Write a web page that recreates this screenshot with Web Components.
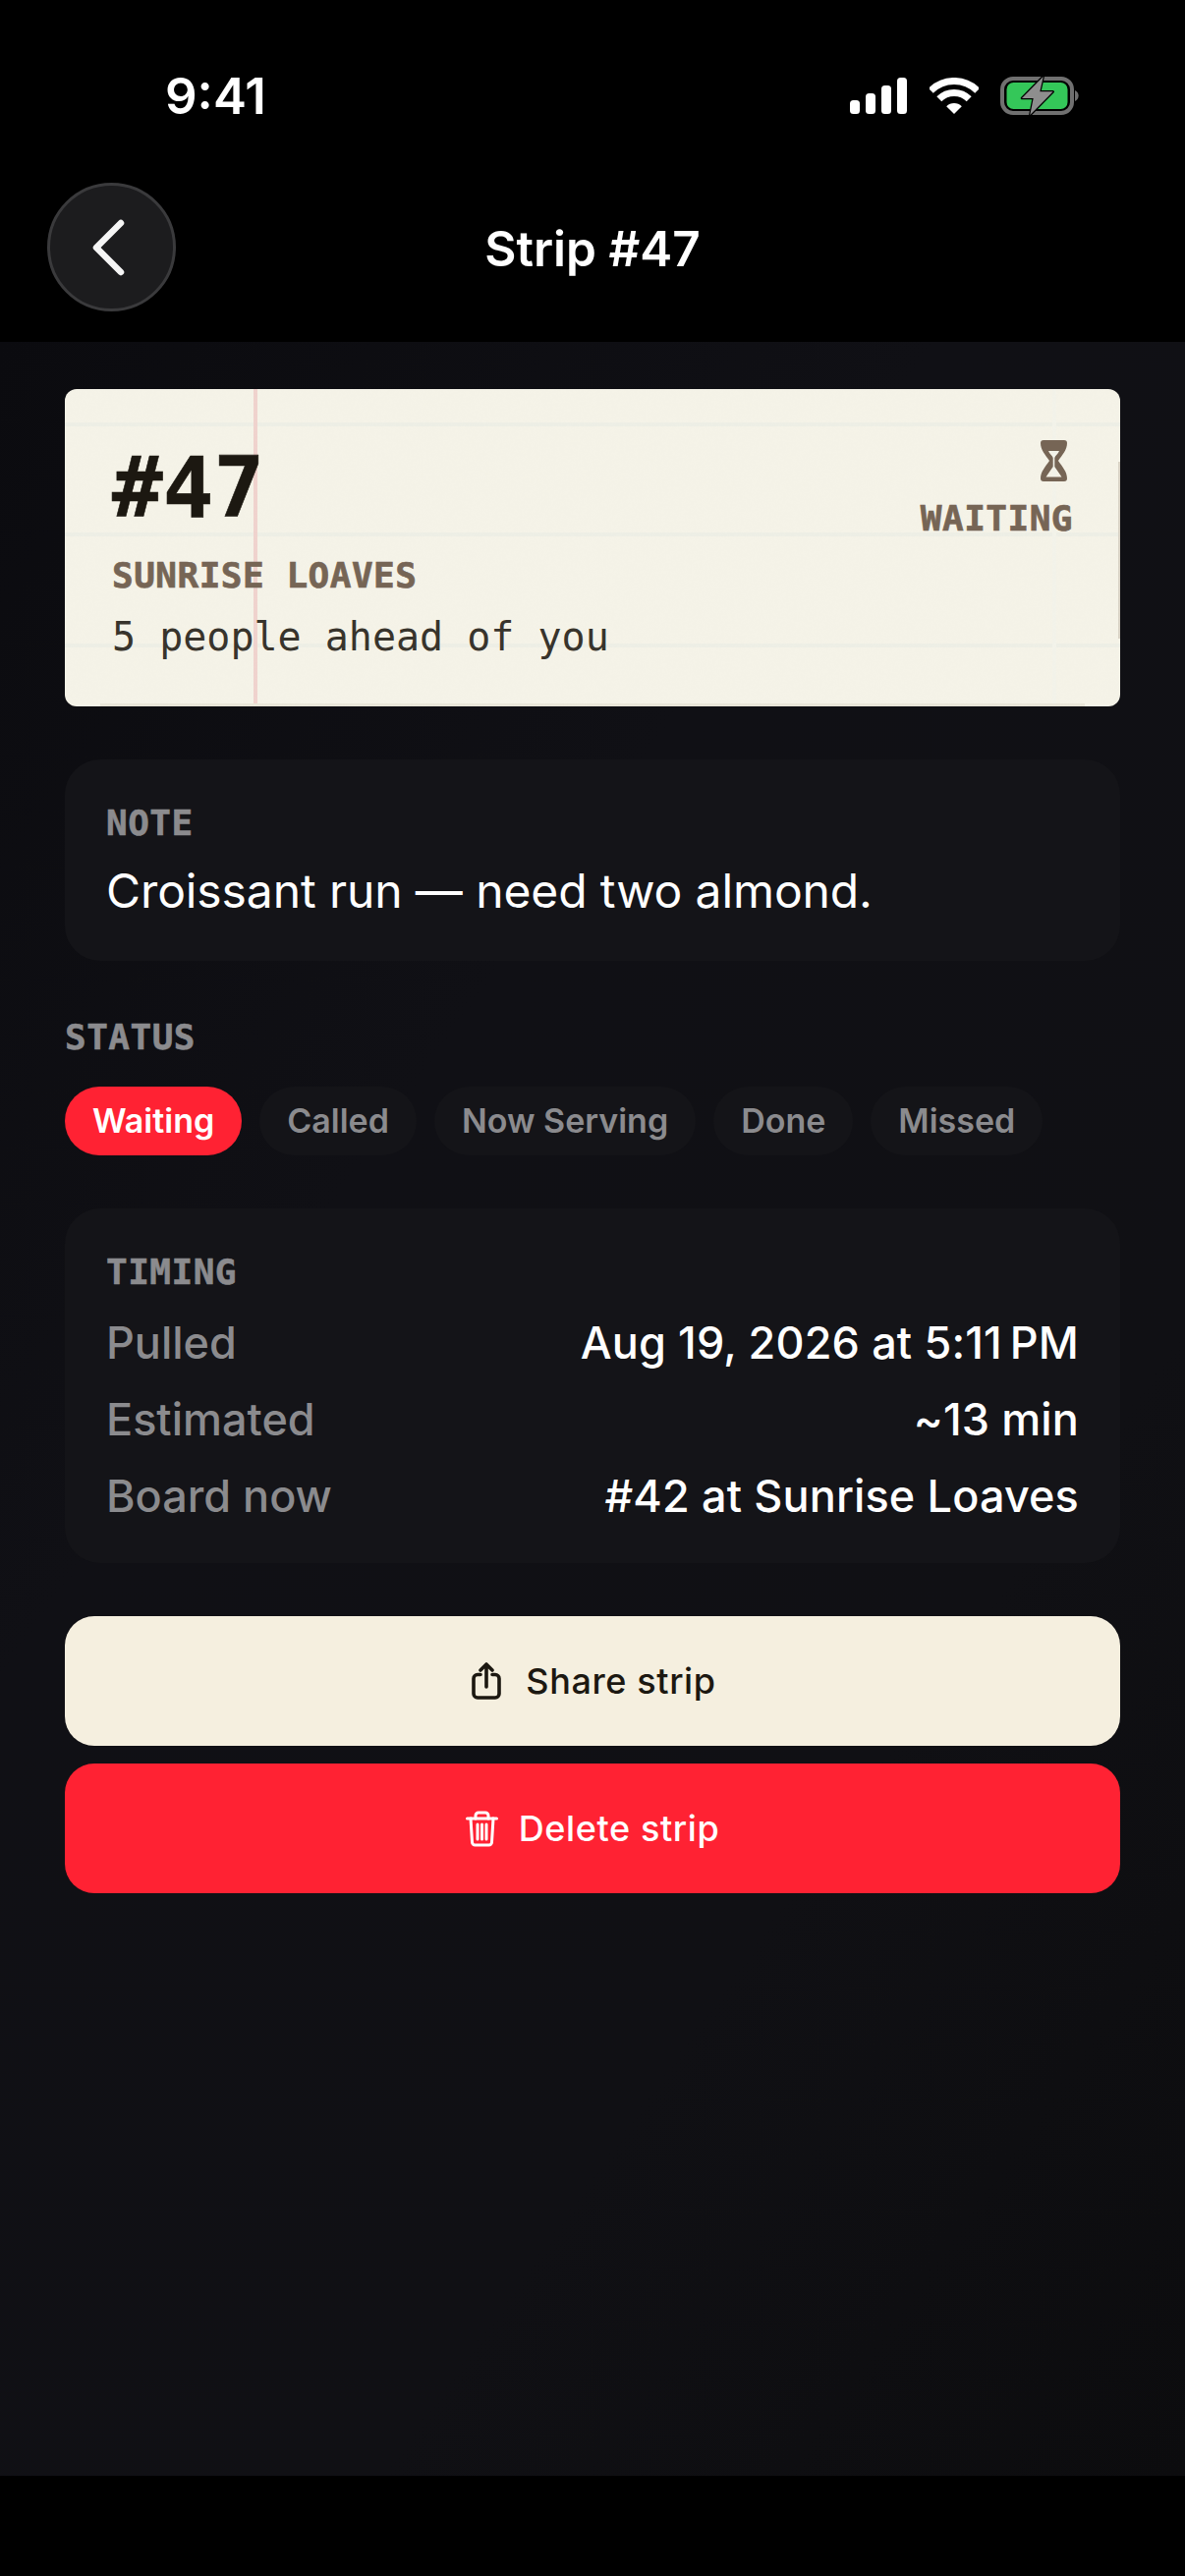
<!DOCTYPE html>
<html lang="en">
<head>
<meta charset="utf-8">
<title>Strip #47</title>
<style>
  html, body { margin: 0; padding: 0; background: #000; }
  body { width: 1206px; height: 2622px; font-family: Inter, "Liberation Sans", sans-serif; color: #fff; overflow: hidden; }
  strip-screen { --mono: "DejaVu Sans Mono", "Liberation Mono", monospace; --sans: Inter, "Liberation Sans", sans-serif; }
</style>
</head>
<body>
<strip-screen>
  <status-bar time="9:41"></status-bar>
  <nav-header>Strip #47</nav-header>
  <ticket-strip number="#47" vendor="SUNRISE LOAVES" ahead="5 people ahead of you" state="WAITING"></ticket-strip>
  <info-card label="NOTE"><note-text>Croissant run — need two almond.</note-text></info-card>
  <status-picker>
    <status-pill active>Waiting</status-pill>
    <status-pill>Called</status-pill>
    <status-pill>Now Serving</status-pill>
    <status-pill>Done</status-pill>
    <status-pill>Missed</status-pill>
  </status-picker>
  <info-card label="TIMING" tight>
    <detail-row label="Pulled">Aug 19, 2026 at 5:11&#8239;PM</detail-row>
    <detail-row label="Estimated">~13 min</detail-row>
    <detail-row label="Board now">#42 at Sunrise Loaves</detail-row>
  </info-card>
  <action-stack>
    <action-button kind="share">Share strip</action-button>
    <action-button kind="delete">Delete strip</action-button>
  </action-stack>
</strip-screen>

<script>
function define(name, html) {
  customElements.define(name, class extends HTMLElement {
    constructor() {
      super();
      const root = this.attachShadow({ mode: 'open' });
      root.innerHTML = typeof html === 'function' ? html(this) : html;
    }
    connectedCallback() {
      if (typeof html === 'function') this.shadowRoot.innerHTML = html(this);
    }
  });
}

define('strip-screen', `
<style>
  :host { display: flex; flex-direction: column; width: 1206px; height: 2622px; background: #000; }
  .head { display: block; background: #000; }
  .body {
    flex: 1; display: flex; flex-direction: column; gap: 54px; padding: 48px 66px 0; box-sizing: border-box;
    background: linear-gradient(125deg, #0b0b0f 0%, #101015 35%, #101014 70%, #0c0c0e 100%);
  }
  .foot { height: 102px; background: #000; }
</style>
<div class="head"><slot name="head"></slot></div>
<div class="body"><slot></slot></div>
<div class="foot"></div>`);

document.querySelectorAll('status-bar, nav-header').forEach(e => e.slot = 'head');

define('status-bar', el => `
<style>
  :host { display: flex; height: 160px; box-sizing: border-box; padding: 77px 106px 0 168px; justify-content: space-between; align-items: flex-start; color: #fff; }
  .time { font: 600 51px/42px var(--sans); letter-spacing: 0; }
  .icons { display: flex; align-items: flex-start; }
  svg { display: block; }
  .sig { margin: 2px 23px 0 0; }
  .wifi { margin: 2px 22px 0 0; }
</style>
<div class="time">${el.getAttribute('time')}</div>
<div class="icons">
  <svg class="sig" width="58" height="37" viewBox="0 0 58 37" fill="#fff">
    <rect x="0" y="23" width="10" height="14" rx="3.5"/><rect x="16" y="16" width="10" height="21" rx="3.5"/>
    <rect x="32" y="8" width="10" height="29" rx="3.5"/><rect x="48" y="0" width="10" height="37" rx="3.5"/>
  </svg>
  <svg class="wifi" width="50" height="37" viewBox="0 0 50 37" fill="none" stroke="#fff">
    <path d="M1.3 13.3A33.5 33.5 0 0 1 48.7 13.3" stroke-width="7"/>
    <path d="M9.8 21.8A21.5 21.5 0 0 1 40.2 21.8" stroke-width="7"/>
    <path d="M25 37L17.2 29.2A11 11 0 0 1 32.8 29.2Z" fill="#fff" stroke="none"/>
  </svg>
  <svg width="82" height="41" viewBox="0 0 82 41">
    <rect x="2" y="3" width="71" height="35" rx="11" fill="none" stroke="#707070" stroke-width="4"/>
    <path d="M76 15a6 6 0 0 1 0 11Z" fill="#707070"/>
    <rect x="6.5" y="7" width="62" height="27" rx="7" fill="#34c759"/>
    <path d="M43.7 1L22 23H33.7L30.3 40L53.7 16.3H40.3Z" fill="#8e8e8e" stroke="#000" stroke-width="2.500" stroke-linejoin="round" paint-order="stroke"/>
  </svg>
</div>`);

define('nav-header', `
<style>
  :host { display: grid; grid-template-columns: 131px 1fr 131px; align-items: center; padding: 26px 48px 31px; color: #fff; }
  .back { width: 131px; height: 131px; box-sizing: border-box; border-radius: 50%; background: #1c1c1e; border: 3px solid #3a3a3c; display: flex; align-items: center; justify-content: center; }
  svg { display: block; margin-left: -8px; }
  .title { text-align: center; font: 600 49.5px/62px var(--sans); padding-top: 2px; }
</style>
<div class="back"><svg width="40" height="62" viewBox="0 0 40 62" fill="none"><path d="M33 6L8 31L33 56" stroke="#f5f5f5" stroke-width="6.500" stroke-linecap="round" stroke-linejoin="round"/></svg></div>
<div class="title"><slot></slot></div>
<div></div>`);

define('ticket-strip', el => `
<style>
  :host {
    display: flex; justify-content: space-between; position: relative; overflow: hidden;
    box-sizing: border-box; height: 323px; padding: 52px 48px 0 48px; border-radius: 12px;
    color: #1c1811; font-family: var(--mono);
    background:
      linear-gradient(#e9e6d9, #e9e6d9) 36px 100% / 1002px 3px no-repeat,
      linear-gradient(#d8d2c5, #d8d2c5) 100% 74px / 2px 180px no-repeat,
      linear-gradient(#f0d3ce, #f0d3ce) 192px 0 / 4px 100% no-repeat,
      linear-gradient(#f3f3ea, #f3f3ea) 1005px 0 / 4px 100% no-repeat,
      linear-gradient(#eeefe6, #eeefe6) 0 34px / 100% 4px no-repeat,
      linear-gradient(#eeefe6, #eeefe6) 0 146px / 100% 4px no-repeat,
      linear-gradient(#eeefe6, #eeefe6) 0 259px / 100% 4px no-repeat,
      #f5f3e8;
  }
  .noise { position: absolute; inset: 0; width: 100%; height: 100%; opacity: .012; pointer-events: none; }
  .left { margin-top: 6px; position: relative; }
  .num { font-weight: 700; font-size: 86px; line-height: 84px; letter-spacing: 0; -webkit-text-stroke: .6px currentColor; }
  .vendor, .state { font-weight: 700; font-size: 36px; line-height: 44px; letter-spacing: .5px; color: #766555; -webkit-text-stroke: .7px currentColor; }
  .vendor { margin-top: 26px; }
  .ahead { margin-top: 16px; font-weight: 400; font-size: 40px; line-height: 48px; color: #38342c; }
  .right { display: flex; flex-direction: column; align-items: flex-end; position: relative; }
  .right svg { display: block; margin: 0 6px 16px 0; }
</style>
<svg class="noise" aria-hidden="true"><filter id="n"><feTurbulence type="fractalNoise" baseFrequency=".35" numOctaves="2"/><feColorMatrix values="0 0 0 0 .4  0 0 0 0 .4  0 0 0 0 .3  0 0 0 1 0"/></filter><rect width="100%" height="100%" filter="url(#n)"/></svg>
<div class="left">
  <div class="num">${el.getAttribute('number')}</div>
  <div class="vendor">${el.getAttribute('vendor')}</div>
  <div class="ahead">${el.getAttribute('ahead')}</div>
</div>
<div class="right">
  <svg width="27" height="42" viewBox="0 0 27 42"><path fill="#766555" fill-rule="evenodd" d="M3 0H24a3 3 0 0 1 3 3C27 10 22 15 18 21C22 27 27 32 27 39a3 3 0 0 1-3 3H3a3 3 0 0 1-3-3C0 32 5 27 9 21C5 15 0 10 0 3a3 3 0 0 1 3-3ZM8 11H19C18 14 15 15.500 14.300 18V27L21.500 37.500H5.500L12.700 27V18C12 15.500 9 14 8 11Z"/></svg>
  <div class="state">${el.getAttribute('state')}</div>
</div>`);

define('info-card', el => `
<style>
  :host { display: block; box-sizing: border-box; background: #141418; border-radius: 36px; padding: 43px 42px ${el.hasAttribute('tight') ? 29 : 38}px; }
  .label { font: 700 36px/44px var(--mono); letter-spacing: .5px; color: #8b8b8e; -webkit-text-stroke: .6px currentColor; margin-bottom: ${el.hasAttribute('tight') ? 11 : 14}px; }
</style>
<div class="label">${el.getAttribute('label')}</div>
<slot></slot>`);

define('note-text', `
<style>:host { display: block; font: 400 48px/66px var(--sans); letter-spacing: -.1px; color: #fff; }</style><slot></slot>`);

define('status-picker', `
<style>
  :host { display: block; padding-top: 2px; }
  .label { font: 700 36px/44px var(--mono); letter-spacing: .5px; color: #8b8b8e; -webkit-text-stroke: .6px currentColor; margin-bottom: 28px; }
  .row { display: flex; gap: 18px; }
</style>
<div class="label">STATUS</div>
<div class="row"><slot></slot></div>`);

define('status-pill', el => `
<style>
  :host { display: flex; align-items: center; height: 70px; padding: 0 28px; border-radius: 35px; font: 600 34px/70px var(--sans); white-space: nowrap;
    background: ${el.hasAttribute('active') ? '#ff2233' : '#141418'}; color: ${el.hasAttribute('active') ? '#fff' : '#8b8b8e'}; }
</style><slot></slot>`);

define('detail-row', el => `
<style>
  :host { display: flex; justify-content: space-between; font: 500 45px/78px var(--sans); white-space: nowrap; }
  .k { color: #8b8b8e; }
  .v { color: #fff; letter-spacing: .14px; }
</style>
<span class="k">${el.getAttribute('label')}</span><span class="v"><slot></slot></span>`);

define('action-stack', `
<style>:host { display: flex; flex-direction: column; gap: 18px; }</style><slot></slot>`);

const ICONS = {
  share: `<svg width="30" height="38" viewBox="0 0 30 38" fill="none" stroke="currentColor" stroke-width="3.6" stroke-linecap="round" stroke-linejoin="round"><path d="M9 12.500H6a4 4 0 0 0-4 4V32a4 4 0 0 0 4 4H24a4 4 0 0 0 4-4V16.500a4 4 0 0 0-4-4H21"/><path d="M15 25V2M9 8L15 2L21 8"/></svg>`,
  delete: `<svg width="33" height="37" viewBox="0 0 33 37" fill="none" stroke="currentColor" stroke-width="3" stroke-linecap="round" stroke-linejoin="round"><path d="M1.500 8H31.500"/><path d="M10 8V5a3 3 0 0 1 3-3h7a3 3 0 0 1 3 3V8"/><path d="M5 8L6.500 32a3 3 0 0 0 3 3h14a3 3 0 0 0 3-3L28 8"/><path d="M12 14V29M16.500 14V29M21 14V29"/></svg>`
};
define('action-button', el => {
  const k = el.getAttribute('kind');
  return `
<style>
  :host { display: flex; align-items: center; justify-content: center; box-sizing: border-box; padding-left: ${k === 'share' ? 3 : 0}px; gap: ${k === 'share' ? 25 : 21}px; height: 132px; border-radius: 30px; font: 500 36px/44px var(--sans); letter-spacing: .6px;
    background: ${k === 'share' ? '#f5efdf' : '#ff2233'}; color: ${k === 'share' ? '#1c1811' : '#fff'}; }
  svg { display: block; }
</style>${ICONS[k]}<span><slot></slot></span>`;
});
</script>
</body>
</html>
